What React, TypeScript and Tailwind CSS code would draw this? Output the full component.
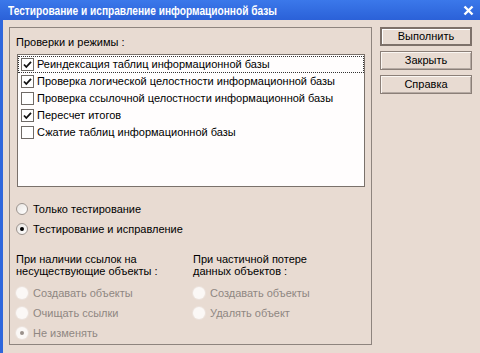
import React from 'react'

const font = { fontFamily: '"Liberation Sans", Arial, sans-serif' }

function CheckBox({ checked }: { checked: boolean }) {
  return (
    <span className="flex h-[13px] w-[13px] shrink-0 items-center justify-center border border-[#6f6a66] bg-white">
      {checked && (
        <svg width="9" height="9" viewBox="0 0 9 9">
          <path d="M1 4.5 L3.3 7 L8 1.8" stroke="#111" strokeWidth="1.8" fill="none" />
        </svg>
      )}
    </span>
  )
}

function Radio({ checked, disabled }: { checked?: boolean; disabled?: boolean }) {
  return (
    <span
      className={
        'flex h-[12px] w-[12px] shrink-0 items-center justify-center rounded-full ' +
        (disabled
          ? 'bg-[#fbf8f6] shadow-[0_0_0_1px_#ece3dd]'
          : 'border border-[#9c948f] bg-gradient-to-br from-[#e9e5e2] to-white')
      }
    >
      {checked && (
        <span className={'h-[4px] w-[4px] rounded-full ' + (disabled ? 'bg-[#9a918b]' : 'bg-black')} />
      )}
    </span>
  )
}

function RadioRow({ label, checked, disabled }: { label: string; checked?: boolean; disabled?: boolean }) {
  return (
    <div className="flex h-[20px] items-center gap-[5px]">
      <Radio checked={checked} disabled={disabled} />
      <span className={disabled ? 'text-[#8f8782]' : 'text-black'}>{label}</span>
    </div>
  )
}

function DlgButton({ label, primary }: { label: string; primary?: boolean }) {
  return (
    <button
      className={
        'flex h-[19px] w-[92px] items-center justify-center bg-[#e8dbd2] text-black ' +
        (primary
          ? 'border-2 border-[#7d716a] shadow-[inset_1px_1px_0_#fff]'
          : 'border border-[#8b7f78] shadow-[inset_1px_1px_0_#fbf6f2,inset_-1px_-1px_0_#b5aaa3]')
      }
    >
      {label}
    </button>
  )
}

const checks = [
  { label: 'Реиндексация таблиц информационной базы', checked: true },
  { label: 'Проверка логической целостности информационной базы', checked: true },
  { label: 'Проверка ссылочной целостности информационной базы', checked: false },
  { label: 'Пересчет итогов', checked: true },
  { label: 'Сжатие таблиц информационной базы', checked: false },
]

export default function App() {
  return (
    <div className="flex h-[353px] w-[480px] flex-col overflow-hidden bg-[#e8dbd2] text-[11px] leading-[13px]" style={font}>
      {/* Title bar */}
      <div className="flex h-[20px] shrink-0 items-center justify-between bg-gradient-to-b from-[#3b78ea] to-[#2b61d8] pl-[8px] pr-[5px]">
        <span className="inline-block origin-left scale-x-[0.78] whitespace-nowrap text-[13px] font-bold text-white">
          Тестирование и исправление информационной базы
        </span>
        <svg width="11" height="11" viewBox="0 0 11 11" className="mr-[1px]">
          <path d="M1.5 1.5 L9.5 9.5 M9.5 1.5 L1.5 9.5" stroke="#fff" strokeWidth="2.4" />
        </svg>
      </div>

      {/* Body */}
      <div className="flex flex-1 gap-[8px] border-l-[3px] border-[#2f66dc] pl-[6px] pt-[7px]">
        {/* Group box */}
        <div className="flex h-[318px] w-[363px] flex-col border border-[#8e847e] pl-[6px] pt-[8px]">
          <div>Проверки и режимы :</div>
          <div className="ml-[1px] mt-[5px] h-[133px] w-[348px] border border-[#7a716b] bg-[#fffdfd] pt-[1px]">
            {checks.map((c, i) => (
              <div
                key={c.label}
                className={
                  'flex h-[17px] items-center gap-[3px] pl-[2px] ' +
                  (i === 0 ? 'border border-dotted border-[#333]' : 'border border-transparent')
                }
              >
                <CheckBox checked={c.checked} />
                <span>{c.label}</span>
              </div>
            ))}
          </div>

          <div className="mt-[12px]">
            <RadioRow label="Только тестирование" />
            <RadioRow label="Тестирование и исправление" checked />
          </div>

          <div className="mt-[14px] flex">
            <div className="w-[177px]">
              <div className="leading-[12px]">
                При наличии ссылок на
                <br />
                несуществующие объекты :
              </div>
              <div className="mt-[6px]">
                <RadioRow label="Создавать объекты" disabled />
                <RadioRow label="Очищать ссылки" disabled />
                <RadioRow label="Не изменять" checked disabled />
              </div>
            </div>
            <div>
              <div className="leading-[12px]">
                При частичной потере
                <br />
                данных объектов :
              </div>
              <div className="mt-[6px]">
                <RadioRow label="Создавать объекты" disabled />
                <RadioRow label="Удалять объект" disabled />
              </div>
            </div>
          </div>
        </div>

        {/* Buttons */}
        <div className="flex flex-col gap-[5px]">
          <DlgButton label="Выполнить" primary />
          <DlgButton label="Закрыть" />
          <DlgButton label="Справка" />
        </div>
      </div>
    </div>
  )
}
